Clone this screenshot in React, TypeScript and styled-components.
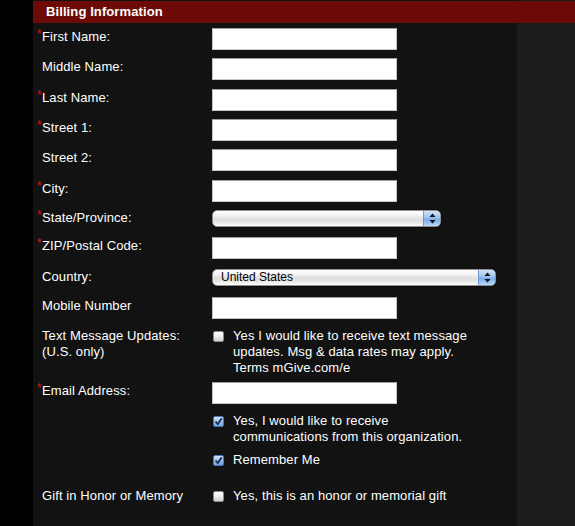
import styled, { createGlobalStyle } from "styled-components";

const GlobalStyle = createGlobalStyle`
  html, body {
    margin: 0;
    padding: 0;
    background: #000;
  }
  body {
    font-family: "Liberation Sans", Arial, Helvetica, sans-serif;
  }
`;

const Page = styled.div`
  display: flex;
  min-height: 100vh;
  background: #000;
`;

const Gutter = styled.div`
  flex: none;
  width: 33px;
`;

const Main = styled.div`
  flex: 1;
  padding-top: 1px;
  background: linear-gradient(to right, #121212 484px, #1c1c1c 484px);
`;

const Header = styled.h2`
  margin: 0;
  height: 22px;
  line-height: 22px;
  padding-left: 13px;
  background: #6d0a06;
  color: #fff;
  font-size: 13px;
  font-weight: bold;
  letter-spacing: 0.1px;
`;

const Form = styled.div`
  width: 484px;
  display: flex;
  flex-direction: column;
  padding-top: 5px;
`;

const Row = styled.div<{ $h: number }>`
  display: grid;
  grid-template-columns: 179px 1fr;
  align-items: start;
  height: ${(p) => p.$h}px;
`;

const Label = styled.div`
  display: flex;
  align-items: flex-start;
  padding: 1px 0 0 4px;
  color: #fff;
  font-size: 13px;
  line-height: 16px;
  letter-spacing: 0.1px;
`;

const Required = styled.span<{ $on?: boolean }>`
  flex: none;
  width: 5px;
  margin-top: -1px;
  font-size: 12px;
  line-height: 12px;
  color: #e81010;
  visibility: ${(p) => (p.$on ? "visible" : "hidden")};
`;

const TextInput = styled.input`
  box-sizing: border-box;
  width: 185px;
  height: 22px;
  margin: 0;
  padding: 0 3px;
  background: #fff;
  border: 1px solid #c6c6c6;
  border-top-color: #9e9e9e;
  font-size: 13px;
  outline: none;
`;

const Select = styled.div<{ $w: number }>`
  box-sizing: border-box;
  display: flex;
  align-items: stretch;
  width: ${(p) => p.$w}px;
  height: 17px;
  margin-top: 1px;
  border: 1px solid #8f8f8f;
  border-radius: 5px;
  overflow: hidden;
  background: linear-gradient(#ffffff, #f3f3f3 30%, #dedede 55%, #ebebeb 80%, #ffffff);
  box-shadow: 0 1px 1px rgba(0, 0, 0, 0.4);
  color: #000;
  font-size: 12px;
`;

const SelectText = styled.span`
  flex: 1;
  padding-left: 8px;
  line-height: 15px;
`;

const SelectButton = styled.span`
  flex: none;
  width: 16px;
  display: flex;
  align-items: center;
  justify-content: center;
  border-left: 1px solid #6f98cf;
  background: linear-gradient(#d2e5fa, #9cc4f0 45%, #79adeb 55%, #b4d6fb);
`;

const CheckField = styled.div`
  display: flex;
  align-items: flex-start;
`;

const Box = styled.span<{ $checked?: boolean }>`
  box-sizing: border-box;
  flex: none;
  display: flex;
  align-items: center;
  justify-content: center;
  width: 11px;
  height: 11px;
  margin: 4px 0 0 1px;
  border: 1px solid ${(p) => (p.$checked ? "#4c78b4" : "#8c8c8c")};
  border-radius: 2px;
  background: ${(p) =>
    p.$checked
      ? "linear-gradient(#d4e6fa, #8dbbec 60%, #6ea6e4)"
      : "linear-gradient(#ffffff, #e6e6e6 60%, #d2d2d2)"};
`;

const CheckText = styled.span`
  margin-left: 9px;
  padding-top: 1px;
  max-width: 248px;
  color: #fff;
  font-size: 13px;
  line-height: 16px;
  letter-spacing: 0.1px;
`;

function Arrows() {
  return (
    <svg width="7" height="11" viewBox="0 0 7 11">
      <path d="M3.5 0.5 L6.5 4 L0.5 4 Z" fill="#111" />
      <path d="M3.5 10.5 L6.5 7 L0.5 7 Z" fill="#111" />
    </svg>
  );
}

function Check() {
  return (
    <svg width="9" height="9" viewBox="0 0 9 9">
      <path
        d="M1.5 4.5 L3.8 7 L7.8 1.2"
        stroke="#1d2e55"
        strokeWidth="1.8"
        fill="none"
      />
    </svg>
  );
}

function FieldLabel({ text, required }: { text: React.ReactNode; required?: boolean }) {
  return (
    <Label>
      <Required $on={required}>*</Required>
      <span>{text}</span>
    </Label>
  );
}

function InputRow({ label, h, required }: { label: string; h: number; required?: boolean }) {
  return (
    <Row $h={h}>
      <FieldLabel text={label} required={required} />
      <TextInput type="text" />
    </Row>
  );
}

function CheckRow({
  label,
  text,
  h,
  checked,
}: {
  label?: React.ReactNode;
  text: string;
  h: number;
  checked?: boolean;
}) {
  return (
    <Row $h={h}>
      {label ? <FieldLabel text={label} /> : <span />}
      <CheckField>
        <Box $checked={checked}>{checked ? <Check /> : null}</Box>
        <CheckText>{text}</CheckText>
      </CheckField>
    </Row>
  );
}

export default function App() {
  return (
    <Page>
      <GlobalStyle />
      <Gutter />
      <Main>
        <Header>Billing Information</Header>
        <Form>
          <InputRow label="First Name:" h={30} required />
          <InputRow label="Middle Name:" h={31} />
          <InputRow label="Last Name:" h={30} required />
          <InputRow label="Street 1:" h={30} required />
          <InputRow label="Street 2:" h={31} />
          <InputRow label="City:" h={29} required />
          <Row $h={28}>
            <FieldLabel text="State/Province:" required />
            <Select $w={229}>
              <SelectText />
              <SelectButton>
                <Arrows />
              </SelectButton>
            </Select>
          </Row>
          <InputRow label="ZIP/Postal Code:" h={31} required />
          <Row $h={29}>
            <FieldLabel text="Country:" />
            <Select $w={284}>
              <SelectText>United States</SelectText>
              <SelectButton>
                <Arrows />
              </SelectButton>
            </Select>
          </Row>
          <InputRow label="Mobile Number" h={30} />
          <CheckRow
            h={55}
            label={
              <>
                Text Message Updates:
                <br />
                (U.S. only)
              </>
            }
            text="Yes I would like to receive text message updates. Msg & data rates may apply. Terms mGive.com/e"
          />
          <InputRow label="Email Address:" h={30} required />
          <CheckRow
            h={39}
            checked
            text="Yes, I would like to receive communications from this organization."
          />
          <CheckRow h={36} checked text="Remember Me" />
          <CheckRow
            h={39}
            label="Gift in Honor or Memory"
            text="Yes, this is an honor or memorial gift"
          />
        </Form>
      </Main>
    </Page>
  );
}
